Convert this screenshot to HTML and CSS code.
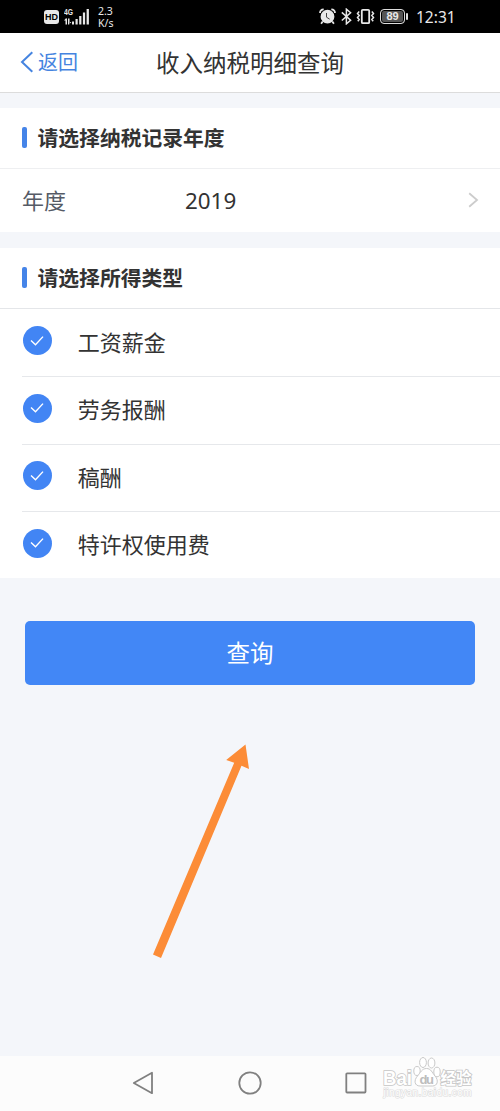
FILE: index.html
```html
<!DOCTYPE html>
<html lang="zh-CN">
<head>
<meta charset="utf-8">
<title>收入纳税明细查询</title>
<link rel="stylesheet" href="styles.css">
</head>
<body>
<div class="screen">
  <div class="status">
    <div class="status-left">
      <span class="hd">HD</span>
      <div class="network">
        <span class="gen">4G</span>
        <svg class="signal" width="26" height="17" viewBox="0 0 26 17" fill="#e8e8e8">
          <path d="M1.5 10.5h1.5v6H1.5zM0 12.5l2.2-2.5v2.5zM4 10.5h1.5v6H4zM5 16.5l2.4-2.6H5z"/>
          <rect x="8" y="13.5" width="2" height="3"/><rect x="11.5" y="11" width="2.2" height="5.5"/><rect x="15.2" y="8" width="2.2" height="8.5"/><rect x="18.9" y="4.5" width="2.2" height="12"/><rect x="22.6" y="1" width="2.3" height="15.5"/>
        </svg>
      </div>
      <div class="speed"><span>2.3</span><span>K/s</span></div>
    </div>
    <div class="status-right">
      <svg width="17" height="17" viewBox="0 0 17 17" fill="none" stroke="#e8e8e8">
        <circle cx="8.5" cy="8.7" r="6.9" fill="#e8e8e8" stroke="none"/>
        <path d="M1 5Q1.2 1.5 4.7 1.4M12.3 1.4Q15.8 1.5 16 5M3.7 13.5l-1.6 2.2M13.3 13.5l1.6 2.2" stroke-width="1.8"/>
        <path d="M7.5 5v4.2l3.2 2" stroke="#444" stroke-width="1"/>
      </svg>
      <svg width="11" height="17" viewBox="0 0 11 17" fill="none" stroke="#e8e8e8" stroke-width="1.5"><path d="M.8 4.4l8.8 7.8-4.2 3.6V1.2l4.2 3.5-8.8 7.8"/></svg>
      <svg width="19" height="17" viewBox="0 0 19 17" fill="none" stroke="#e8e8e8"><rect x="5.8" y="1.8" width="7.4" height="13.4" rx="1" stroke-width="1.8"/><path d="M3.2 3.500L1.500 5.500l1.700 2-1.700 2 1.700 2-1.400 1.700M15.800 3.500l1.700 2-1.700 2 1.700 2-1.700 2 1.400 1.700" stroke-width="1.5"/></svg>
      <div class="battery"><span class="cell">89</span><span class="tip"></span></div>
      <span class="clock">12:31</span>
    </div>
  </div>

  <header class="header">
    <a class="back"><svg width="14" height="22" viewBox="0 0 14 22" fill="none" stroke="#4584e0" stroke-width="2"><path d="M12.3 1.2L2 11l10.3 9.8"/></svg><span>返回</span></a>
    <h1 class="title">收入纳税明细查询</h1>
  </header>

  <section class="panel">
    <h2 class="panel-title">请选择纳税记录年度</h2>
    <div class="year">
      <span class="year-label">年度</span><span class="year-value">2019</span>
      <svg width="11" height="16" viewBox="0 0 11 16" fill="none" stroke="#ccc" stroke-width="1.8"><path d="M1.2 1.2L9 8l-7.8 6.8"/></svg>
    </div>
  </section>

  <section class="panel types">
    <h2 class="panel-title">请选择所得类型</h2>
    <div class="options">
      <div class="option"><span class="check"><svg width="14" height="12" viewBox="0 0 14 12"><path d="M1 5.4l4.5 4.4L13 1.6"/></svg></span><span>工资薪金</span></div>
      <div class="option"><span class="check"><svg width="14" height="12" viewBox="0 0 14 12"><path d="M1 5.4l4.5 4.4L13 1.6"/></svg></span><span>劳务报酬</span></div>
      <div class="option"><span class="check"><svg width="14" height="12" viewBox="0 0 14 12"><path d="M1 5.4l4.5 4.4L13 1.6"/></svg></span><span>稿酬</span></div>
      <div class="option"><span class="check"><svg width="14" height="12" viewBox="0 0 14 12"><path d="M1 5.4l4.5 4.4L13 1.6"/></svg></span><span>特许权使用费</span></div>
    </div>
  </section>

  <button class="query">查询</button>

  <svg class="arrow" width="100" height="218" viewBox="0 0 100 218"><path d="M95.500 4.500l3.500 24.500-7.500-3.200L11 218 3 214.500 84.200 22.800l-8-2.800z" fill="#fc8c37"/></svg>

  <nav class="nav">
    <svg width="22" height="24" viewBox="0 0 22 24"><path d="M20 1.8v20.4L1.8 12z"/></svg>
    <svg width="24" height="24" viewBox="0 0 24 24"><circle cx="12" cy="12" r="10.7"/></svg>
    <svg width="22" height="22" viewBox="0 0 22 22"><rect x="1.3" y="1.3" width="19.2" height="19.2" rx=".8"/></svg>
  </nav>

  <div class="watermark">
    <svg width="98" height="48" viewBox="0 0 98 48">
      <g class="mark">
        <text x="3" y="32" font-size="20" textLength="29" lengthAdjust="spacingAndGlyphs">Bai</text>
        <text x="60.500" y="31" font-size="15.500" textLength="31">经验</text>
      </g>
      <g fill="#fff" stroke="#c9c9c9" stroke-width="1">
        <ellipse cx="37" cy="18" rx="3.200" ry="4.500"/><ellipse cx="43" cy="9.500" rx="3.400" ry="5"/><ellipse cx="51.500" cy="10" rx="3.400" ry="5"/><ellipse cx="57" cy="19" rx="3.200" ry="4.800"/>
        <path d="M46.500 15.500c4.500 0 5.500 4 8.500 7.500 4 4.500 2.500 10-2.500 10H40c-5.500 0-6.500-5.500-2.500-10 3-3.500 4.500-7.500 9-7.500z"/>
      </g>
      <text class="du" x="39.500" y="31" font-size="13" textLength="14.500">du</text>
      <text class="site" x="3.500" y="43" font-size="10" textLength="88">jingyan.baidu.com</text>
    </svg>
  </div>
</div>
</body>
</html>
```
FILE: styles.css
```css
* { box-sizing: border-box; }
body { margin: 0; }
svg { display: block; flex: none; }
.screen {
  position: relative;
  display: flex;
  flex-direction: column;
  width: 500px;
  height: 1111px;
  overflow: hidden;
  background: #f4f6fa;
  color: #333;
  font-family: "Noto Sans CJK SC", sans-serif;
}
.status {
  display: flex;
  justify-content: space-between;
  align-items: center;
  height: 33px;
  flex: none;
  padding: 0 45px 0 44px;
  background: #000;
  color: #e8e8e8;
  font-family: "Noto Sans", sans-serif;
}
.status-left, .status-right { display: flex; align-items: center; }
.hd {
  width: 15px;
  height: 14px;
  border-radius: 3px;
  background: #e8e8e8;
  color: #000;
  font: bold 9px/14px "Liberation Sans", sans-serif;
  text-align: center;
}
.network { position: relative; margin-left: 5px; }
.gen { position: absolute; left: 0; top: 0; font: bold 9px/9px "Liberation Sans", sans-serif; transform: scaleX(.75); transform-origin: left; }
.speed { display: flex; flex-direction: column; margin-left: 8px; font-size: 10.500px; line-height: 12px; }
.battery { display: flex; align-items: center; gap: 1px; margin-left: 5px; }
.cell {
  width: 25px;
  height: 15px;
  border: 1.500px solid #ddd;
  border-radius: 4px;
  background: #555;
  box-shadow: inset 0 0 0 1px #000;
  font: bold 11px/13px "Liberation Sans", sans-serif;
  text-align: center;
}
.tip { width: 2px; height: 7px; background: #ddd; border-radius: 1px; }
.status-right svg + svg { margin-left: 4.500px; }
.clock { width: 39px; margin-left: 8px; font-size: 15.500px; line-height: 20px; white-space: nowrap; }
.header {
  display: grid;
  grid-template-columns: 100px 1fr 100px;
  align-items: center;
  height: 60px;
  flex: none;
  padding-bottom: 2px;
  border-bottom: 1px solid #dcdcdc;
  background: #fff;
}
.back { display: flex; align-items: center; gap: 4px; padding-left: 20px; color: #4584e0; font-size: 20px; line-height: 28px; }
.title { margin: 0; text-align: center; font-weight: 400; font-size: 23.500px; line-height: 30px; white-space: nowrap; }
.panel { margin-top: 15px; background: #fff; flex: none; }
.panel-title {
  display: flex;
  align-items: center;
  gap: 11px;
  height: 61px;
  margin: 0;
  padding: 0 0 2px 21.500px;
  border-bottom: 1px solid #eeeff1;
  font-size: 20.800px;
  line-height: 30px;
}
.panel-title::before { content: ""; width: 5px; height: 21px; border-radius: 2px; background: #4584e8; }
.year { display: flex; align-items: center; height: 63px; padding: 0 21px 2px 22px; font-size: 22px; line-height: 30px; }
.year-label { width: 163px; padding-bottom: 2px; color: #555b66; }
.year-value { flex: 1; padding-top: 2px; font-family: "Noto Sans", sans-serif; font-size: 22.400px; }
.types { margin-top: 16px; }
.types .panel-title { border-color: #e4e6e9; }
.options { padding-left: 22px; }
.option { display: flex; align-items: center; gap: 26px; height: 67.300px; padding-bottom: 4px; font-size: 22px; line-height: 30px; }
.option + .option { border-top: 1px solid #e6e8eb; }
.check { display: grid; place-items: center; width: 29px; height: 29px; margin-left: .8px; border-radius: 50%; background: #4285f4; }
.check path { fill: none; stroke: #fff; stroke-width: 1.400; }
.query {
  flex: none;
  height: 64px;
  margin: 42.800px 25px 0;
  padding: 0 0 2px;
  border: 0;
  border-radius: 5px;
  background: #4287f6;
  color: #fff;
  font: 23.500px/30px "Noto Sans CJK SC", sans-serif;
}
.arrow { position: absolute; left: 150px; top: 740px; }
.nav {
  display: flex;
  align-items: center;
  gap: 83.500px;
  height: 55px;
  flex: none;
  margin-top: auto;
  padding: 0 0 1px 132px;
  background: #fcfcfc;
}
.nav svg { fill: none; stroke: #808080; stroke-width: 1.800; stroke-linejoin: round; }
.watermark { position: absolute; left: 380px; top: 1053px; }
.mark { fill: #fff; stroke: #c6c6c6; stroke-width: 1.600px; paint-order: stroke; font-weight: 700; font-family: "Liberation Sans", "Noto Sans CJK SC", sans-serif; }
.du { fill: #bdbdbd; font-weight: 700; font-family: "Liberation Sans", sans-serif; }
.site { fill: #fff; stroke: #dcdcdc; stroke-width: 1.200px; paint-order: stroke; font-family: "Liberation Sans", sans-serif; }
```
